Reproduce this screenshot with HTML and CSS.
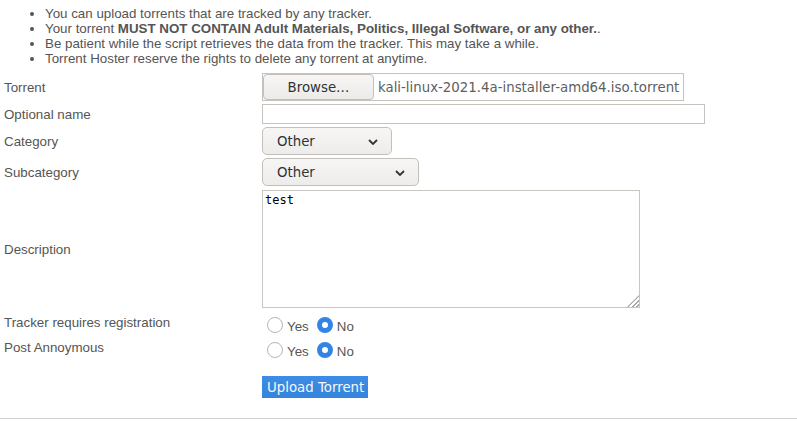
FILE: index.html
```html
<!DOCTYPE html>
<html>
<head>
<link rel="stylesheet" href="styles.css">
</head>
<body>
<ul class="rules">
  <li>You can upload torrents that are tracked by any tracker.</li>
  <li>Your torrent <b>MUST NOT CONTAIN Adult Materials, Politics, Illegal Software, or any other.</b>.</li>
  <li>Be patient while the script retrieves the data from the tracker. This may take a while.</li>
  <li>Torrent Hoster reserve the rights to delete any torrent at anytime.</li>
</ul>
<form class="upload">
  <div class="row r-file">
    <div class="label">Torrent</div>
    <div class="filebox">
      <button type="button" class="browse">Browse…</button>
      <span class="filename">kali-linux-2021.4a-installer-amd64.iso.torrent</span>
    </div>
  </div>
  <div class="row r-name">
    <div class="label">Optional name</div>
    <input type="text" class="textbox">
  </div>
  <div class="row r-cat">
    <div class="label">Category</div>
    <span class="selwrap">
      <select class="sel cat"><option>Other</option></select>
      <svg class="chev" width="10" height="6" viewBox="0 0 10 6"><path d="M1 1 L5 5 L9 1" fill="none" stroke="#2e3436" stroke-width="1.8"/></svg>
    </span>
  </div>
  <div class="row r-sub">
    <div class="label">Subcategory</div>
    <span class="selwrap">
      <select class="sel sub"><option>Other</option></select>
      <svg class="chev" width="10" height="6" viewBox="0 0 10 6"><path d="M1 1 L5 5 L9 1" fill="none" stroke="#2e3436" stroke-width="1.8"/></svg>
    </span>
  </div>
  <div class="row r-desc">
    <div class="label">Description</div>
    <span class="areawrap">
      <textarea class="desc">test</textarea>
      <span class="grip"></span>
    </span>
  </div>
  <div class="row r-radio first">
    <div class="label">Tracker requires registration</div>
    <div class="radios">
      <input type="radio" name="reg" class="rad"><span class="opt">Yes</span>
      <input type="radio" name="reg" class="rad" checked><span class="opt">No</span>
    </div>
  </div>
  <div class="row r-radio second">
    <div class="label">Post Annoymous</div>
    <div class="radios">
      <input type="radio" name="anon" class="rad"><span class="opt">Yes</span>
      <input type="radio" name="anon" class="rad" checked><span class="opt">No</span>
    </div>
  </div>
  <div class="row r-submit">
    <div class="label"></div>
    <button type="button" class="submit">Upload Torrent</button>
  </div>
</form>
<div class="rule"></div>
</body>
</html>
```

FILE: styles.css
```css
* {box-sizing: border-box;}

body {
  margin: 0;
  font-family: "Liberation Sans", Arial, sans-serif;
  font-size: 13.33px;
  line-height: 15px;
  color: #555;
  background: #fff;
}

.rules {
  margin: 6px 0 0 5px;
  padding-left: 40px;
}

.upload {
  margin-top: 7px;
  padding-left: 4px;
}

.row {
  display: flex;
  align-items: center;
}

.label {
  width: 258px;
  flex: none;
}

.r-name, .r-cat, .r-sub {margin-top: 3px;}
.r-desc {margin-top: 4px;}
.r-radio {align-items: flex-start; height: 21px;}
.r-radio .label {padding-top: 3px;}
.r-radio.first {margin-top: 4px;}
.r-radio.second {margin-top: 4px;}
.r-submit {margin-top: 18px;}

/* file picker */
.filebox {
  display: flex;
  align-items: center;
  width: 422px;
  height: 28px;
  border: 1px solid #c6c3bf;
  padding: 0;
}

.browse {
  width: 111px;
  height: 26px;
  margin: 0;
  border: 1px solid #c3bfbb;
  border-radius: 4px;
  background: linear-gradient(#f7f6f5, #edebe9);
  font-family: "DejaVu Sans", sans-serif;
  font-size: 13.33px;
  color: #2e3436;
  padding: 0;
}

.filename {
  margin-left: 4px;
  font-family: "DejaVu Sans", sans-serif;
  font-size: 13.33px;
  color: #5e5e5e;
  white-space: nowrap;
}

.textbox {
  width: 443px;
  height: 20px;
  margin: 0;
  border: 1px solid #c6c3bf;
  padding: 1px 2px;
  font-family: "DejaVu Sans", sans-serif;
  font-size: 13.33px;
}

/* selects */
.selwrap {
  position: relative;
  display: flex;
}

.sel {
  appearance: none;
  -webkit-appearance: none;
  height: 28px;
  margin: 0;
  border: 1px solid #c3bfbb;
  border-radius: 5px;
  background: linear-gradient(#f7f6f5, #eeecea);
  padding: 0 0 0 14px;
  font-family: "DejaVu Sans", sans-serif;
  font-size: 13.33px;
  color: #2e3436;
}

.sel.cat {width: 130px;}
.sel.sub {width: 157px;}

.chev {
  position: absolute;
  right: 14px;
  top: 12px;
  pointer-events: none;
}

/* description */
.areawrap {
  position: relative;
  display: flex;
}

.desc {
  width: 378px;
  height: 118px;
  margin: 0;
  border: 1px solid #c9c5c1;
  padding: 2px 2px;
  font-family: "DejaVu Sans Mono", monospace;
  font-size: 12px;
  line-height: 14px;
  color: #000;
  resize: none;
}

.grip {
  position: absolute;
  right: 1px;
  bottom: 1px;
  width: 12px;
  height: 12px;
  background: repeating-linear-gradient(135deg, transparent 0 2px, #a8a5a2 2px 3.2px);
  clip-path: polygon(100% 0, 100% 100%, 0 100%);
  pointer-events: none;
}

/* radios */
.radios {
  display: flex;
  align-items: flex-start;
}

.rad {
  appearance: none;
  -webkit-appearance: none;
  width: 16px;
  height: 16px;
  margin: 5px 4px 0 5px;
  border: 1px solid #b9b5b1;
  border-radius: 50%;
  background: #fff;
}

.rad:checked {
  border: 5px solid #3584e4;
}

.opt {
  margin: 7px 3px 0 0;
}

.opt + .rad {
  margin-left: 5px;
}

/* submit */
.submit {
  height: 22px;
  margin: 0;
  border: none;
  padding: 0 4px 0 5px;
  background: linear-gradient(#3d8ce6, #3584db);
  color: #f4f8fd;
  font-family: "DejaVu Sans", sans-serif;
  font-size: 13.33px;
}

.rule {
  margin-top: 20px;
  border-top: 1px solid #d3d3d3;
}
```
